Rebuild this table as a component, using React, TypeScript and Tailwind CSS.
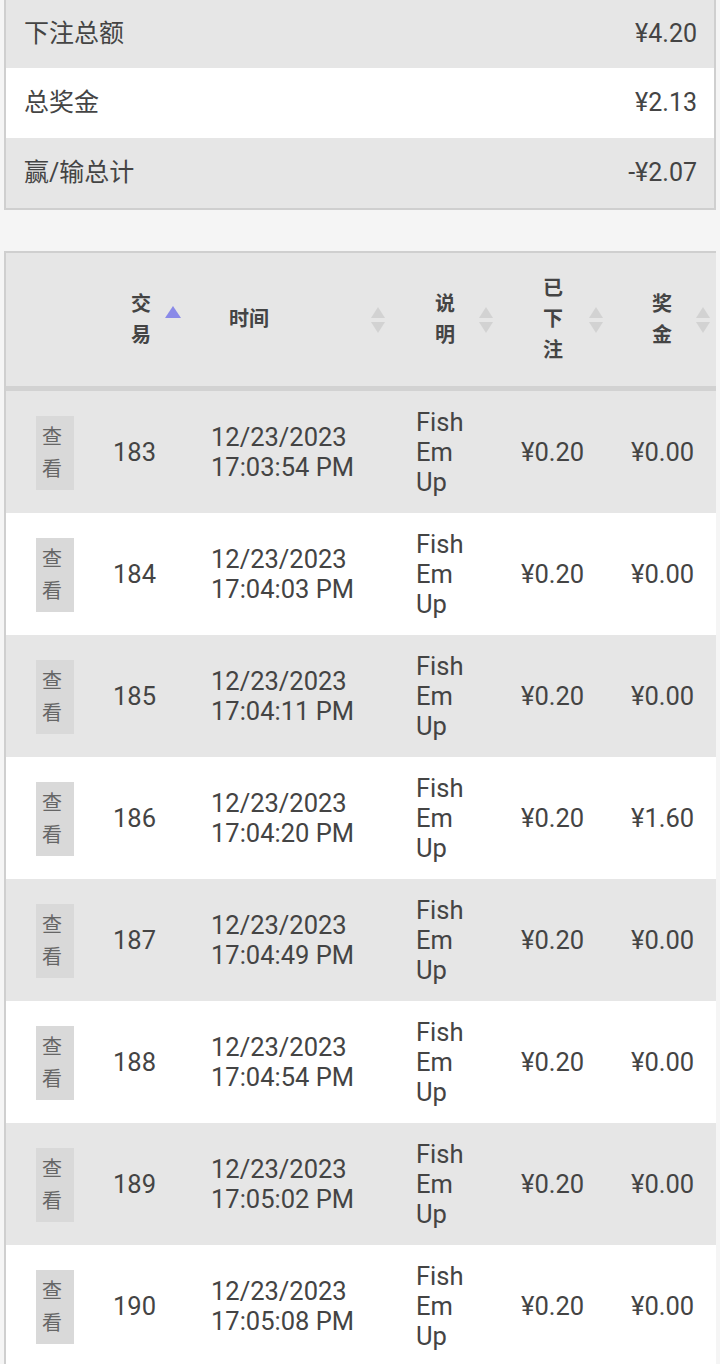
import React from "react";

const font = { fontFamily: 'Roboto, "Noto Sans CJK SC", sans-serif' };

function SortIcon() {
  return (
    <svg width="16" height="30" viewBox="0 0 16 30" className="shrink-0">
      <polygon points="8,2 15,13 1,13" fill="#d2d2d2" />
      <polygon points="1,17 15,17 8,28" fill="#d2d2d2" />
    </svg>
  );
}

function SortUp() {
  return (
    <svg width="16" height="30" viewBox="0 0 16 30" className="shrink-0">
      <polygon points="8,3 16,15 0,15" fill="#8a8ae8" />
    </svg>
  );
}

const rows = [
  { id: 183, t: "17:03:54 PM", p: "¥0.00" },
  { id: 184, t: "17:04:03 PM", p: "¥0.00" },
  { id: 185, t: "17:04:11 PM", p: "¥0.00" },
  { id: 186, t: "17:04:20 PM", p: "¥1.60" },
  { id: 187, t: "17:04:49 PM", p: "¥0.00" },
  { id: 188, t: "17:04:54 PM", p: "¥0.00" },
  { id: 189, t: "17:05:02 PM", p: "¥0.00" },
  { id: 190, t: "17:05:08 PM", p: "¥0.00" },
];

const grid = "grid grid-cols-[94px_100px_200px_110px_110px_110px] w-[724px]";

export default function App() {
  return (
    <div className="min-h-[1364px] bg-[#f5f5f5] text-[#444]" style={font}>
      {/* Summary */}
      <div className="mx-[4px] border-2 border-t-0 border-[#cfcfcf] text-[25px]">
        <div className="h-[68px] bg-[#e6e6e6] flex items-center justify-between pl-[18px] pr-[17px]">
          <span>下注总额</span>
          <span>¥4.20</span>
        </div>
        <div className="h-[70px] bg-white flex items-center justify-between pl-[18px] pr-[17px]">
          <span>总奖金</span>
          <span>¥2.13</span>
        </div>
        <div className="h-[70px] bg-[#e6e6e6] flex items-center justify-between pl-[18px] pr-[17px]">
          <span>赢/输总计</span>
          <span>-¥2.07</span>
        </div>
      </div>

      {/* Table */}
      <div className="mt-[41px] ml-[4px] w-[712px] overflow-hidden border-l-2 border-t-2 border-[#cfcfcf]">
        <div className={`${grid} h-[138px] bg-[#e6e6e6] border-b-[5px] border-[#d2d2d2] text-[20px] font-bold text-[#444] leading-[31px]`}>
          <div />
          <div className="flex items-center pl-[31px]">
            <span className="w-[21px] break-all">交易</span>
            <span className="ml-[13px] -mt-[4px]"><SortUp /></span>
          </div>
          <div className="flex items-center pl-[29px] pr-[14px] justify-between">
            <span>时间</span>
            <SortIcon />
          </div>
          <div className="flex items-center pl-[35px]">
            <span className="w-[21px] break-all">说明</span>
            <span className="ml-[22px]"><SortIcon /></span>
          </div>
          <div className="flex items-center pl-[33px]">
            <span className="w-[21px] break-all">已下注</span>
            <span className="ml-[24px]"><SortIcon /></span>
          </div>
          <div className="flex items-center pl-[32px]">
            <span className="w-[21px] break-all">奖金</span>
            <span className="ml-[22px]"><SortIcon /></span>
          </div>
        </div>
        {rows.map((r, i) => (
          <div
            key={r.id}
            className={`${grid} h-[122px] text-[25.5px] leading-[30px] ${i % 2 === 0 ? "bg-[#e6e6e6]" : "bg-white"}`}
          >
            <div className="flex items-center pl-[30px]">
              <div className="w-[38px] bg-[#d9d9d9] text-[#666] text-[20px] leading-[32px] text-left pl-[6px] py-[5px] mt-[2px]">
                <div>查</div>
                <div>看</div>
              </div>
            </div>
            <div className="flex items-center pl-[13px]">{r.id}</div>
            <div className="flex flex-col justify-center pl-[11px] whitespace-nowrap">
              <span>12/23/2023</span>
              <span>{r.t}</span>
            </div>
            <div className="flex items-center pl-[16px]">
              <span className="w-[60px]">Fish Em Up</span>
            </div>
            <div className="flex items-center pl-[11px] whitespace-nowrap">¥0.20</div>
            <div className="flex items-center pl-[11px] whitespace-nowrap">{r.p}</div>
          </div>
        ))}
      </div>
    </div>
  );
}
